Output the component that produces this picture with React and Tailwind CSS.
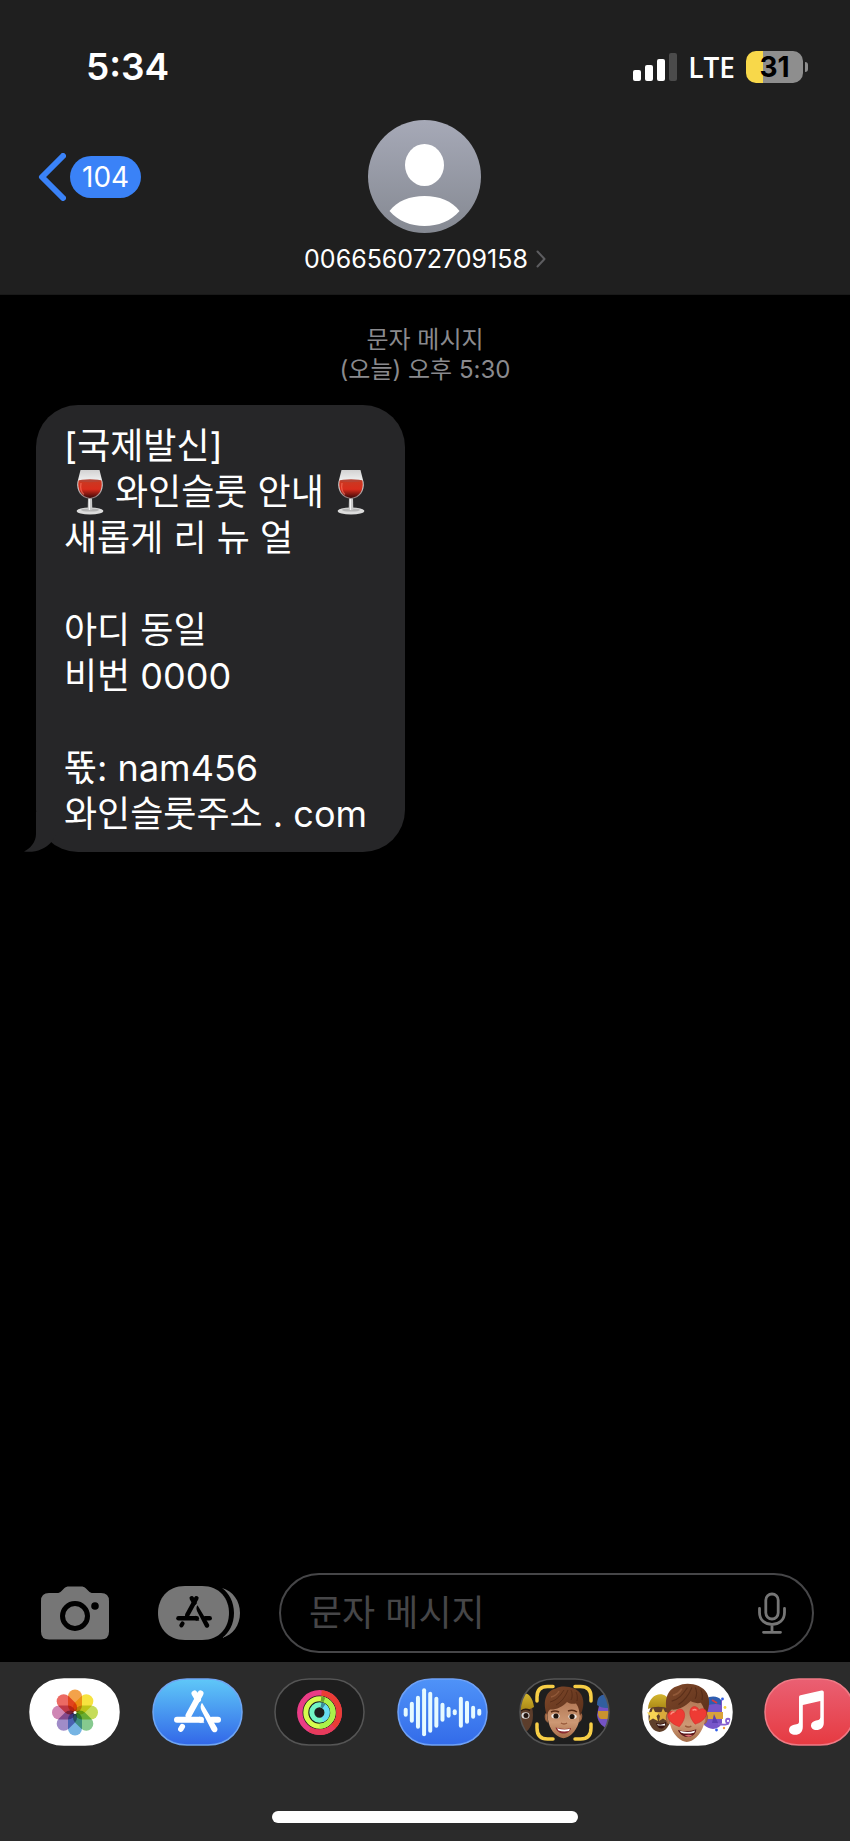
import React from "react";

const PILL =
  "M35 1H56C78 1 90 17 90 34S78 67 56 67H35C13 67 1 51 1 34S13 1 35 1Z";

function Pill({ label, id, fill, stroke, children }) {
  return (
    <button type="button" aria-label={label} className="h-[68px] w-[91px] shrink-0">
      <svg viewBox="0 0 91 68" className="block h-full w-full" aria-hidden="true">
        <defs>
          <clipPath id={id}>
            <path d={PILL} />
          </clipPath>
        </defs>
        <path d={PILL} fill={fill} />
        <g clipPath={`url(#${id})`}>{children}</g>
        <path d={PILL} fill="none" stroke={stroke} strokeWidth="1.5" />
      </svg>
    </button>
  );
}

function StoreGlyph() {
  return (
    <g stroke="currentColor" strokeLinecap="round" fill="none">
      <path d="M48.5 15.5L36.500 37.500" strokeWidth="6" />
      <path d="M42.500 15.500L46 21.500" strokeWidth="6" />
      <path d="M25 41.800H49" strokeWidth="6" />
      <path d="M48 39L52 44.600H48Z" fill="currentColor" strokeWidth="0.500" />
      <path d="M60 41.800H66" strokeWidth="6" />
      <path d="M30.300 48.700L28.800 51.200" strokeWidth="5.500" />
      <path
        d="M50 24.800C48.300 27 48.200 30 49.500 32.500L59.600 52.200C60.500 54 62.400 54.700 64 53.900C65.500 53 65.900 51.300 65.100 49.700Z"
        fill="currentColor"
        stroke="none"
      />
    </g>
  );
}

const WINE_BOWL = "M4.500 1H23.500L26.500 13C28 22 23 29 14 30C5 29 0 22 1.500 13Z";

function Wine({ id }) {
  return (
    <svg
      viewBox="0 0 28 46"
      role="img"
      aria-label="와인"
      className="mr-[7px] ml-3 inline-block h-[46px] w-[28px] align-middle last:mr-0 last:ml-[9px]"
    >
      <defs>
        <linearGradient id={id} x1="0" y1="0" x2="0" y2="1">
          <stop offset="0" stopColor="#c93a22" />
          <stop offset="0.500" stopColor="#d92c1c" />
          <stop offset="1" stopColor="#3a0808" />
        </linearGradient>
        <linearGradient id={`${id}g`} x1="0" y1="0" x2="0" y2="1">
          <stop offset="0" stopColor="#d2d2d2" />
          <stop offset="0.400" stopColor="#f2f2f2" />
          <stop offset="1" stopColor="#8b7777" />
        </linearGradient>
      </defs>
      <path d={WINE_BOWL} fill={`url(#${id}g)`} />
      <path d="M2.500 11.500H25.500C27 21 22.500 28 14 29C5.500 28 1 21 2.500 11.500Z" fill={`url(#${id})`} />
      <ellipse cx="14" cy="11.800" rx="11.300" ry="1.500" fill="#b84334" />
      <path d="M5 14C4 20 6 24 8 25.500" stroke="#ff7b68" strokeWidth="1.300" fill="none" opacity="0.600" />
      <ellipse cx="14" cy="42" rx="13.300" ry="3.600" fill="#dcdcdc" />
      <ellipse cx="14" cy="41" rx="9" ry="1.600" fill="#b5b5b5" />
      <path d="M12 29.500H16L16.300 40.500C15 41.600 13 41.600 11.700 40.500Z" fill="#c9c9c9" />
      <path d="M13.500 30V41" stroke="#f4f4f4" strokeWidth="1" />
    </svg>
  );
}

const PETALS = ["#f3a24a", "#f7e33f", "#c5dc5a", "#86c98f", "#76b4e3", "#a08cc8", "#cf86b4", "#ec6a63"];
const WAVE = [9, 21, 33, 48, 41, 31, 19, 11, 6, 31, 23, 13, 7];

function Head({ children }) {
  return (
    <g>
      <path d="M28 35C25 35 26 44 29 44M61 35C64 35 63 43 60 44" fill="#b1754f" stroke="#9d6240" />
      <path d="M28 27C28 19 61 19 61 28C62 42 59 50 53 56C47 61.500 42 61.500 36 56C30 50 28 42 28 27Z" fill="url(#skin)" />
      {children}
      <path
        d="M28 37C23.500 25 26 13 37 10.500C43 6.500 58 8.500 62.500 17C66 24 64 32 61 38C60 34 60.500 30 57 25.500C53 26.500 49 25 48 24C43 29 37 32 31 31.500C29 33 29 35 28 37Z"
        fill="url(#hair)"
      />
      <path d="M31 24C39 22 42 16 45 12M37 27C44 23 47 17 49 12M52 22C54 18 53 14 52 12M58 23C59 19 58 16 57 14" stroke="#472110" strokeWidth="1" fill="none" opacity="0.550" />
      <path d="M32 19C36 18 39 15 40 13" stroke="#9b6340" strokeWidth="1.500" fill="none" opacity="0.700" />
    </g>
  );
}

export default function App() {
  return (
    <div className="flex min-h-screen w-full flex-col overflow-hidden bg-black font-['Inter','Noto_Sans_CJK_KR',sans-serif] text-white">
      <header className="border-b border-[#191919] bg-[#1f1f1f] pt-[45px] pb-[17px]">
        <div className="flex h-11 items-center justify-between pr-[42px] pl-[86px]">
          <time className="text-[37px] leading-[44px] font-semibold">5:34</time>
          <div className="flex items-center gap-[11px]">
            <svg viewBox="0 0 44 28" className="h-7 w-11" role="img" aria-label="신호 세기">
              <rect x="0" y="17" width="8" height="11" rx="2" fill="#fff" />
              <rect x="12" y="12" width="8" height="16" rx="2" fill="#fff" />
              <rect x="24" y="6" width="8" height="22" rx="2" fill="#fff" />
              <rect x="36" y="0" width="8" height="28" rx="2" fill="#4b4b4b" />
            </svg>
            <span className="font-['Open_Sans',sans-serif] text-[28px] leading-[36px] font-semibold">LTE</span>
            <div className="flex items-center gap-[2px]">
              <div className="flex h-8 w-[57px] items-center justify-center rounded-[10px] bg-[linear-gradient(90deg,#f8d84a_17px,#8e8e8e_17px)] text-[28px] leading-8 font-bold text-black">
                31
              </div>
              <div className="h-[10px] w-[3px] rounded-r-full bg-[#8e8e8e]" />
            </div>
          </div>
        </div>

        <div className="mt-[31px] grid grid-cols-[1fr_auto_1fr] items-start">
          <button type="button" aria-label="뒤로, 104" className="flex h-[113px] items-center gap-1 pl-[38px]">
            <svg viewBox="0 0 28 48" className="h-12 w-7" aria-hidden="true">
              <path d="M25 3L4 24L25 45" fill="none" stroke="#3a82f7" strokeWidth="6" strokeLinecap="round" strokeLinejoin="round" />
            </svg>
            <span className="rounded-full bg-[#3a82f7] px-3 text-[28px] leading-[42px]">104</span>
          </button>
          <button type="button" className="flex flex-col items-center">
            <svg viewBox="0 0 113 113" className="size-[113px]" aria-hidden="true">
              <defs>
                <linearGradient id="avatar" x1="0" y1="0" x2="0" y2="1">
                  <stop offset="0" stopColor="#a6a9b7" />
                  <stop offset="1" stopColor="#858992" />
                </linearGradient>
              </defs>
              <circle cx="56.500" cy="56.500" r="56.500" fill="url(#avatar)" />
              <ellipse cx="56.500" cy="45" rx="19.500" ry="21" fill="#fff" />
              <path d="M21.500 91C29 81 42 76 56.500 76S84 81 91.500 91C83 101 70 106 56.500 106S30 101 21.500 91Z" fill="#fff" />
            </svg>
            <span className="mt-2 flex items-center gap-2 text-[25px] leading-9">
              006656072709158
              <svg viewBox="0 0 10 18" className="h-[18px] w-[10px]" aria-hidden="true">
                <path d="M1.500 1.500L8.500 9L1.500 16.500" fill="none" stroke="#5d5d60" strokeWidth="2" strokeLinecap="round" strokeLinejoin="round" />
              </svg>
            </span>
          </button>
        </div>
      </header>

      <main className="flex-1 px-9 pt-[30px]">
        <p className="text-center text-[24px] leading-[30px] text-[#8a8a8e]">
          문자 메시지
          <br />
          (오늘) 오후 5:30
        </p>
        <div className="relative mt-5 w-fit rounded-[42px] bg-[#262628] pt-[18px] pr-[38px] pb-[15px] pl-7 text-[36px] leading-[46px]">
          <svg viewBox="0 0 40 40" className="absolute bottom-0 left-[-12px] size-10" aria-hidden="true">
            <path d="M12 0V22C12 30 6 37 0 39.500C11 41 21 37 26.500 31L34 20V0Z" fill="#262628" />
          </svg>
          <div className="relative">
            <p>[국제발신]</p>
            <p className="flex h-[46px] items-center whitespace-nowrap">
              <Wine id="wine1" />
              <span className="px-1">와인슬룻 안내</span>
              <Wine id="wine2" />
            </p>
            <p>새롭게 리 뉴 얼</p>
            <br />
            <p>아디 동일</p>
            <p>비번 0000</p>
            <br />
            <p>뚃: nam456</p>
            <p>와인슬룻주소 . com</p>
          </div>
        </div>
      </main>

      <form className="flex items-center pr-9 pb-[9px] pl-[41px]" onSubmit={(e) => e.preventDefault()}>
        <button type="button" aria-label="카메라" className="shrink-0">
          <svg viewBox="0 0 68 54" className="h-[54px] w-[68px]" aria-hidden="true">
            <path
              d="M8 7H16C18 7 19 6.500 20.500 5L23 2.500C24.500 1 26 0.500 28 0.500H40C42 0.500 43.500 1 45 2.500L47.500 5C49 6.500 50 7 52 7H60Q68 7 68 15V45.500Q68 53.500 60 53.500H8Q0 53.500 0 45.500V15Q0 7 8 7Z"
              fill="#767676"
            />
            <circle cx="34" cy="30" r="12.500" fill="none" stroke="#000" strokeWidth="5" />
            <circle cx="54" cy="20" r="3.800" fill="#000" />
          </svg>
        </button>
        <button type="button" aria-label="앱" className="ml-[49px] shrink-0 text-black">
          <svg viewBox="0 0 82 54" className="h-[54px] w-[82px]" aria-hidden="true">
            <path d="M27 0H44C62 0 71 13 71 27S62 54 44 54H27C9 54 0 41 0 27S9 0 27 0Z" fill="#767676" />
            <path d="M64 2C75 5 82 15 82 27S75 49 64 52C71 47 76 38 76 27S71 7 64 2Z" fill="#767676" />
            <g transform="translate(1.500 0.500) scale(0.760)">
              <StoreGlyph />
            </g>
          </svg>
        </button>
        <div className="ml-[39px] flex h-20 min-w-0 flex-1 items-center rounded-full border-2 border-[#464648] pr-[26px] pl-7">
          <input
            type="text"
            aria-label="문자 메시지"
            placeholder="문자 메시지"
            className="min-w-0 flex-1 bg-transparent text-[36px] leading-[46px] outline-none placeholder:text-[#464648]"
          />
          <button type="button" aria-label="받아쓰기" className="shrink-0">
            <svg viewBox="0 0 28 42" className="h-[42px] w-7" fill="none" stroke="#767676" strokeWidth="2.800" strokeLinecap="round" aria-hidden="true">
              <rect x="7.800" y="2" width="12.400" height="25" rx="6.200" />
              <path d="M1.500 16.500V20.500C1.500 28 7 32.500 14 32.500S26.500 28 26.500 20.500V16.500M14 33V40M5.500 40.300H22.500" />
            </svg>
          </button>
        </div>
      </form>

      <footer className="bg-[#2b2b2b] pt-4 pb-[18px]">
        <svg className="absolute size-0" aria-hidden="true">
          <defs>
            <linearGradient id="store" x1="0" y1="0" x2="0" y2="1">
              <stop offset="0" stopColor="#5fc8f8" />
              <stop offset="1" stopColor="#3267e8" />
            </linearGradient>
            <linearGradient id="audio" x1="0" y1="0" x2="0" y2="1">
              <stop offset="0" stopColor="#4f93f8" />
              <stop offset="1" stopColor="#336be9" />
            </linearGradient>
            <linearGradient id="music" x1="0" y1="0" x2="0" y2="1">
              <stop offset="0" stopColor="#ea6073" />
              <stop offset="1" stopColor="#e63a41" />
            </linearGradient>
            <linearGradient id="skin" x1="0" y1="0" x2="0" y2="1">
              <stop offset="0" stopColor="#b07653" />
              <stop offset="0.600" stopColor="#cd9874" />
              <stop offset="1" stopColor="#a66d49" />
            </linearGradient>
            <linearGradient id="hair" x1="0" y1="0" x2="1" y2="1">
              <stop offset="0" stopColor="#80492a" />
              <stop offset="1" stopColor="#5a2f1a" />
            </linearGradient>
            <linearGradient id="beanie" x1="0" y1="0" x2="0" y2="1">
              <stop offset="0" stopColor="#d3b52f" />
              <stop offset="1" stopColor="#a98715" />
            </linearGradient>
          </defs>
        </svg>
        <nav aria-label="앱" className="-mr-[5px] ml-[29px] flex justify-between">
          <Pill label="사진" id="p1" fill="#fff" stroke="#fff">
            <g transform="translate(46 34.500)" style={{ isolation: "isolate" }}>
              <circle r="25" fill="#fff" />
              {PETALS.map((c, i) => (
                <rect key={c} x="-7" y="-23" width="14" height="23" rx="7" fill={c} transform={`rotate(${i * 45})`} className="mix-blend-multiply" />
              ))}
              <circle r="1.500" fill="#fff" />
            </g>
          </Pill>
          <Pill label="앱 스토어" id="p2" fill="url(#store)" stroke="#6fa5f2">
            <g className="text-white">
              <StoreGlyph />
            </g>
          </Pill>
          <Pill label="피트니스" id="p3" fill="#1e1e1e" stroke="#555">
            <g transform="translate(45.500 34.500)" fill="none">
              <circle r="19.700" stroke="#ea3c86" strokeWidth="5.500" />
              <path d="M2 -19.600A19.700 19.700 0 0 1 0 19.700" stroke="#ea3d35" strokeWidth="5.500" />
              <path d="M14 14A19.700 19.700 0 0 1 -10 17" stroke="#e73b5c" strokeWidth="5.500" />
              <circle r="13.700" stroke="#d6fb4e" strokeWidth="5" />
              <path d="M2 -13.500A13.700 13.700 0 0 1 0 13.700" stroke="#aaf24a" strokeWidth="5" />
              <path d="M1.500 -13.600A13.700 13.700 0 0 1 5 -12.700" stroke="#6fa52f" strokeWidth="5" />
              <circle r="7.700" stroke="#72f5c4" strokeWidth="5" />
              <path d="M2 -7.400A7.700 7.700 0 0 1 3 7.100" stroke="#67dcf5" strokeWidth="5" />
              <path d="M1.500 -7.500A7.700 7.700 0 0 1 4.500 -6.200" stroke="#3b8d99" strokeWidth="5" />
            </g>
          </Pill>
          <Pill label="오디오" id="p4" fill="url(#audio)" stroke="#6fa1f6">
            {WAVE.map((h, i) => (
              <rect key={i} x={6.7 + i * 6.13} y={34.3 - h / 2} width="4" height={h} rx="2" fill="#e6faff" />
            ))}
          </Pill>
          <Pill label="미모티콘" id="p5" fill="#1e1e1e" stroke="#555">
            <ellipse cx="3" cy="37" rx="11" ry="18" fill="#5c3d2b" />
            <path d="M-6 31C-3 12 12 9 15 29C9 33 0 33 -6 31Z" fill="url(#beanie)" />
            <ellipse cx="6.500" cy="37.500" rx="4" ry="3.200" fill="#ddd" />
            <circle cx="7" cy="37.500" r="2.500" fill="#22140f" />
            <path d="M2 33Q6 30 11 32.500" stroke="#2c1a12" strokeWidth="1.500" fill="none" />
            <path d="M82 18C86 15 92 15 95 18V53C88 52 79 47 78 37Z" fill="#7552c4" />
            <path d="M78 27C78 18 82 15 92 17V29C88 31 82 30 78 27Z" fill="#315f9f" />
            <path d="M79 33H92V41H82C79 40 79 37 79 33Z" fill="#c8922f" />
            <Head>
              <path d="M32 34Q36 32 40 34M49 33Q54 31 58 34" stroke="#5a2c15" strokeWidth="1.500" fill="none" />
              <ellipse cx="36.500" cy="38" rx="4.200" ry="2.500" fill="#f4ece6" />
              <ellipse cx="53.500" cy="38.500" rx="4.200" ry="2.500" fill="#f4ece6" />
              <circle cx="37" cy="38" r="2.600" fill="#21150e" />
              <circle cx="53" cy="38.500" r="2.600" fill="#21150e" />
              <path d="M42 45Q45 47 48 45" stroke="#96583a" strokeWidth="1.500" fill="none" />
              <path d="M36.500 49.500Q45 52 52 50C51 57 39 58 36.500 49.500Z" fill="#8c2b30" />
              <path d="M38 50.300Q45 52.500 51 50.700L50 53Q44 54 39.500 52.500Z" fill="#fff" />
            </Head>
            <g fill="none" stroke="#f7ce46" strokeWidth="3.500" strokeLinecap="round">
              <path d="M18 23V19Q18 8.500 28.500 8.500H34" />
              <path d="M56 8.500H61.500Q72 8.500 72 19V23" />
              <path d="M18 46V50Q18 61 28.500 61H34" />
              <path d="M56 61H61.500Q72 61 72 50V46" />
            </g>
          </Pill>
          <Pill label="미모티콘 스티커" id="p6" fill="#fff" stroke="#fff">
            <ellipse cx="17.500" cy="39" rx="11" ry="15" fill="#5f3f2a" />
            <path d="M6 31C7 14 24 12 28 24V31C20 28 12 28 6 31Z" fill="url(#beanie)" />
            <path d="M14 45Q19 47 24 44C24 52 16 53 14 45Z" fill="#35120f" />
            <path d="M15 46Q19 47.500 23 45.500V47.500H16Z" fill="#fff" />
            <path d="M11 30L13 34L18 34.500L14.500 38L16 43L11 40.500L7 43L8 38L5 34.500L9.500 34Z" fill="#f8d454" />
            <path d="M21 30L23 34L27 34.500L24.500 38L25 43L21 40.500L17 43L18 38L15 34.500L19.500 34Z" fill="#d9aa3b" />
            <path d="M64 22H80V45C76 53 67 52 62 47Z" fill="#7655c9" />
            <path d="M64 21C68 17 77 18 79 22V27C74 25 69 26 64 28Z" fill="#2d5db0" />
            <path d="M70 22L75 25" stroke="#d63a42" strokeWidth="2" />
            <path d="M64 34H81V41H64Z" fill="#d9a23a" />
            <path d="M72 36L76 45H70Z" fill="#5b3fb0" />
            <path d="M76 46C82 47 88 47 88 43C88 40 84 40 84 43S88 45 89 43" fill="none" stroke="#8860d0" strokeWidth="1.800" />
            <circle cx="80.500" cy="21" r="1.400" fill="#315ee8" />
            <circle cx="83" cy="29.500" r="1.400" fill="#f1d443" />
            <circle cx="74.500" cy="52" r="1.400" fill="#315ee8" />
            <circle cx="82" cy="50" r="1.200" fill="#f19b3e" />
            <g transform="translate(-5 -4) scale(1.120 1.130)">
              <Head>
                <path d="M36.500 49.500Q45 52 53 49C52 58 40 58 36.500 49.500Z" fill="#5c171a" />
                <path d="M38 50.300Q45 52.500 52 50L51 52Q44 53.500 39.500 52Z" fill="#fff" />
                <path d="M42.500 54.500Q46 53 49.500 54.500Q46 56.500 42.500 54.500Z" fill="#e26d73" />
                <path d="M43 46Q46 48 48.500 46" stroke="#96583a" strokeWidth="1.300" fill="none" />
              </Head>
            </g>
            <path transform="translate(35 40) rotate(-15)" d="M0 9C-11 2 -10 -8 -4 -8C-2 -8 0 -6.500 0 -5C0 -6.500 2 -8 4 -8C10 -8 11 2 0 9Z" fill="#ee3b34" stroke="#d32c2a" strokeWidth="0.500" />
            <path transform="translate(55.500 37.500) rotate(15)" d="M0 9C-11 2 -10 -8 -4 -8C-2 -8 0 -6.500 0 -5C0 -6.500 2 -8 4 -8C10 -8 11 2 0 9Z" fill="#ee3b34" stroke="#d32c2a" strokeWidth="0.500" />
            <path d="M29 36Q30 34 32 34M51 32Q53 31 54 32" stroke="#ff8e82" strokeWidth="1.500" fill="none" strokeLinecap="round" />
          </Pill>
          <Pill label="음악" id="p7" fill="url(#music)" stroke="#ee7a85">
            <path
              d="M36.500 17.200L57.500 12.500Q59.800 12 59.800 14.300V45C59.800 49.500 56.500 52 52.500 52C49 52 47 50 47 47.500C47 44.500 49.200 43 52 42.400L54.500 41.900Q56.300 41.500 56.300 39.500V23L38.800 26.900V49C38.800 54 35.500 56.800 31.300 56.800C27.500 56.800 25 55 25 52C25 49 27 47.300 30 46.700L33.500 46Q35 45.700 35 44V19Q35 17.500 36.500 17.200Z"
              fill="#fff"
            />
          </Pill>
        </nav>
        <div className="mx-auto mt-[65px] h-3 w-[36%] rounded-full bg-white" />
      </footer>
    </div>
  );
}
